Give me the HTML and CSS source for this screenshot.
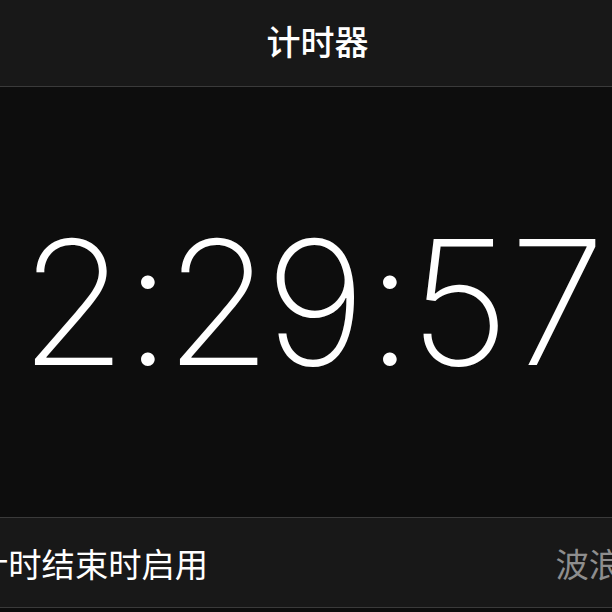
FILE: index.html
```html
<!DOCTYPE html>
<html lang="zh-CN">
<head>
<meta charset="utf-8">
<title>计时器</title>
<link rel="stylesheet" href="styles.css">
</head>
<body>
<div class="screen">
  <header class="header">
    <h1 class="title">计时器</h1>
  </header>
  <main class="display">
    <div class="timer">2<span class="sep">:</span>29<span class="sep">:</span>57</div>
  </main>
  <div class="row">
    <span class="label">计时结束时启用</span>
    <span class="value">波浪</span>
  </div>
</div>
</body>
</html>
```
FILE: styles.css
```css
html, body {
  margin: 0;
  padding: 0;
  background: #0d0d0d;
}
body {
  width: 612px;
  height: 612px;
  overflow: hidden;
  font-family: "Noto Sans CJK SC", "Noto Sans", sans-serif;
  color: #ffffff;
}
.screen {
  display: flex;
  flex-direction: column;
}
.header {
  height: 86px;
  background: #181818;
  border-bottom: 1px solid #3a3a3a;
  display: flex;
  align-items: center;
  justify-content: center;
}
.title {
  margin: 0;
  font-size: 34px;
  font-weight: 500;
  line-height: 1;
  padding-left: 23px;
  padding-bottom: 5px;
}
.display {
  height: 430px;
  display: flex;
  align-items: center;
  justify-content: center;
  overflow: hidden;
}
.timer {
  font-family: "Inter", "Roboto", sans-serif;
  font-weight: 200;
  font-size: 173px;
  line-height: 1;
  font-feature-settings: "tnum" 1;
  letter-spacing: -15px;
  white-space: nowrap;
  padding-left: 4px;
}
.sep {
  margin: 0 7px 0 10px;
}
.row {
  height: 89px;
  background: #181818;
  border-top: 1px solid #3a3a3a;
  border-bottom: 1px solid #3a3a3a;
  display: flex;
  align-items: center;
  justify-content: space-between;
  overflow: hidden;
}
.label {
  font-size: 33.3px;
  font-weight: 400;
  line-height: 1;
  margin-left: -25px;
  white-space: nowrap;
}
.value {
  font-size: 33.3px;
  font-weight: 400;
  line-height: 1;
  color: #8e8e8e;
  margin-right: -10px;
  white-space: nowrap;
}
```
